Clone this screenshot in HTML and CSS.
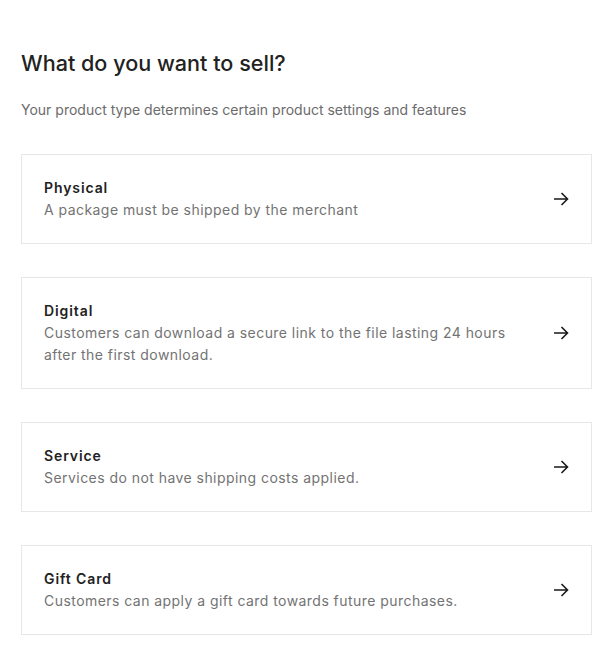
FILE: index.html
```html
<!DOCTYPE html>
<html>
<head>
<meta charset="utf-8">
<link rel="stylesheet" href="styles.css">
</head>
<body>
<main class="page">
  <h1 class="title">What do you want to sell?</h1>
  <p class="subtitle">Your product type determines certain product settings and features</p>
  <div class="list">
    <div class="card">
      <div class="text">
        <div class="name">Physical</div>
        <div class="desc">A package must be shipped by the merchant</div>
      </div>
      <svg class="arrow" viewBox="0 0 16 16" width="16" height="16"><path d="M1 8H14.5M8.5 2L14.5 8L8.5 14" fill="none" stroke="#1a1a1a" stroke-width="1.6"/></svg>
    </div>
    <div class="card">
      <div class="text">
        <div class="name">Digital</div>
        <div class="desc">Customers can download a secure link to the file lasting 24 hours after the first download.</div>
      </div>
      <svg class="arrow" viewBox="0 0 16 16" width="16" height="16"><path d="M1 8H14.5M8.5 2L14.5 8L8.5 14" fill="none" stroke="#1a1a1a" stroke-width="1.6"/></svg>
    </div>
    <div class="card">
      <div class="text">
        <div class="name">Service</div>
        <div class="desc">Services do not have shipping costs applied.</div>
      </div>
      <svg class="arrow" viewBox="0 0 16 16" width="16" height="16"><path d="M1 8H14.5M8.5 2L14.5 8L8.5 14" fill="none" stroke="#1a1a1a" stroke-width="1.6"/></svg>
    </div>
    <div class="card">
      <div class="text">
        <div class="name">Gift Card</div>
        <div class="desc">Customers can apply a gift card towards future purchases.</div>
      </div>
      <svg class="arrow" viewBox="0 0 16 16" width="16" height="16"><path d="M1 8H14.5M8.5 2L14.5 8L8.5 14" fill="none" stroke="#1a1a1a" stroke-width="1.6"/></svg>
    </div>
  </div>
</main>
</body>
</html>
```
FILE: styles.css
```css
html, body {
  margin: 0;
  padding: 0;
  background: #fff;
}
body {
  font-family: Inter, "Liberation Sans", sans-serif;
  color: #222;
}
.page {
  padding: 48px 22px 20px 21px;
}
.title {
  margin: 0;
  font-size: 21.6px;
  font-weight: 500;
  line-height: 30px;
  color: #222;
}
.subtitle {
  margin: 21px 0 0;
  font-size: 14px;
  line-height: 22px;
  color: #6b6b6b;
  letter-spacing: 0;
}
.list {
  margin-top: 33px;
  display: flex;
  flex-direction: column;
  gap: 33px;
}
.card {
  border: 1px solid #e7e7e7;
  padding: 22px;
  display: flex;
  align-items: center;
  gap: 30px;
}
.text {
  flex: 1;
}
.name {
  font-size: 14px;
  line-height: 22px;
  font-weight: 600;
  letter-spacing: 0.9px;
  color: #222;
}
.desc {
  font-size: 14px;
  line-height: 22px;
  color: #737373;
  letter-spacing: 0.45px;
}
.arrow {
  flex: none;
}
```
